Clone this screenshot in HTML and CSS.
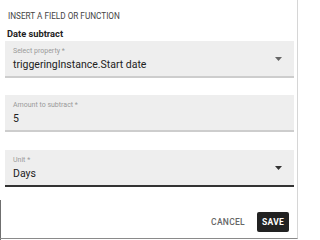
FILE: index.html
```html
<!DOCTYPE html>
<html>
<head>
<meta charset="utf-8">
<link rel="stylesheet" href="styles.css">
</head>
<body>
<div class="frame">
  <div class="dialog">
    <div class="content">
      <div class="title">INSERT A FIELD OR FUNCTION</div>
      <div class="subtitle">Date subtract</div>
      <div class="field light first">
        <div class="label">Select property *</div>
        <div class="value">triggeringInstance.Start date</div>
        <svg class="arrow" width="7" height="4" viewBox="0 0 7 4"><path d="M0 0h7L3.5 4z" fill="#666"/></svg>
      </div>
      <div class="field light">
        <div class="label">Amount to subtract *</div>
        <div class="value">5</div>
      </div>
      <div class="field dark">
        <div class="label">Unit *</div>
        <div class="value">Days</div>
        <svg class="arrow" width="7" height="4" viewBox="0 0 7 4"><path d="M0 0h7L3.5 4z" fill="#333"/></svg>
      </div>
    </div>
    <div class="actions">
      <button class="btn cancel">CANCEL</button>
      <button class="btn save">SAVE</button>
    </div>
  </div>
</div>
</body>
</html>
```

FILE: styles.css
```css
html, body {
  margin: 0;
  padding: 0;
  background: #fff;
}
body {
  font-family: Roboto, "Liberation Sans", sans-serif;
  width: 300px;
  height: 240px;
  overflow: hidden;
}
.frame {
  width: 300px;
  height: 240px;
  background:
    linear-gradient(to bottom, transparent 200px, #6f6f6f 200px) left top / 1px 100% no-repeat,
    #fff;
}
.dialog {
  width: 298px;
  height: 239px;
  border-right: 1px solid #d6d6d6;
  border-bottom: 1px solid #8a8a8a;
  box-sizing: border-box;
  display: flex;
  flex-direction: column;
  justify-content: space-between;
}
.content {
  display: flex;
  flex-direction: column;
  padding: 0 3px 0 5px;
}
.title {
  font-size: 8.2px;
  color: #444;
  margin: 11px 0 0 3px;
  line-height: 10px;
}
.subtitle {
  font-size: 9.3px;
  font-weight: bold;
  color: #222;
  margin: 7px 0 0 2px;
  line-height: 12px;
}
.field {
  position: relative;
  background: #eeeeee;
  height: 37px;
  box-sizing: border-box;
  padding: 6px 8px 0 8px;
  margin-top: 17px;
}
.field.first { margin-top: 1px; }
.field.light { border-bottom: 2px solid #cdcdcd; }
.field.dark { border-bottom: 2px solid #333; margin-top: 18px; }
.label {
  font-size: 7px;
  line-height: 9px;
  color: #9a9a9a;
}
.value {
  font-size: 10.5px;
  line-height: 14px;
  color: #222;
  margin-top: 2px;
}
.arrow {
  position: absolute;
  right: 12px;
  top: 16px;
}
.actions {
  display: flex;
  justify-content: flex-end;
  align-items: center;
  gap: 11px;
  padding: 0 8px 6px 0;
}
.btn {
  font-family: Roboto, "Liberation Sans", sans-serif;
  border: none;
  font-size: 8.5px;
  font-weight: bold;
  letter-spacing: 0.3px;
  padding: 0;
  height: 20px;
  border-radius: 2px;
}
.cancel {
  background: transparent;
  color: #666;
  font-weight: 500;
  padding: 0 1px;
}
.save {
  background: #222;
  color: #fff;
  width: 32px;
}
```
